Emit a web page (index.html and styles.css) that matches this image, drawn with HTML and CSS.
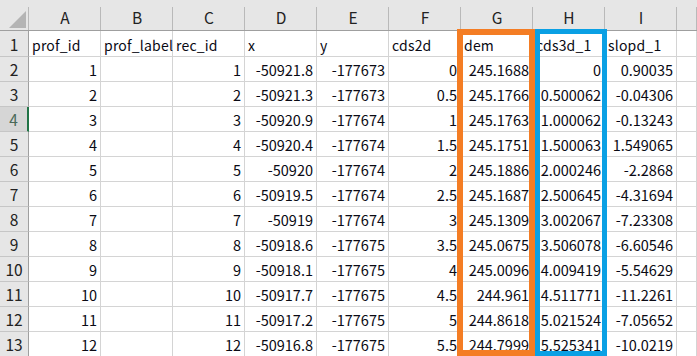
FILE: index.html
```html
<!DOCTYPE html>
<html lang="ja">
<head>
<meta charset="utf-8">
<title>Sheet</title>
<link rel="stylesheet" href="styles.css">
</head>
<body>
<div class="sheet">
  <div class="grid">
    <div class="corner"><svg class="tri" width="17" height="17" viewBox="0 0 17 17"><polygon points="17,0 17,17 0,17" fill="#b4b4b4"/></svg></div>
    <div class="ch">A</div><div class="ch">B</div><div class="ch">C</div><div class="ch">D</div><div class="ch">E</div><div class="ch">F</div><div class="ch">G</div><div class="ch">H</div><div class="ch">I</div><div class="ch"></div>

    <div class="rh">1</div><div class="c t">prof_id</div><div class="c t">prof_label</div><div class="c t">rec_id</div><div class="c t">x</div><div class="c t">y</div><div class="c t">cds2d</div><div class="c t">dem</div><div class="c t">cds3d_1</div><div class="c t">slopd_1</div><div class="c"></div>

    <div class="rh">2</div><div class="c n">1</div><div class="c"></div><div class="c n">1</div><div class="c n">-50921.8</div><div class="c n">-177673</div><div class="c n">0</div><div class="c n">245.1688</div><div class="c n">0</div><div class="c n">0.90035</div><div class="c"></div>

    <div class="rh">3</div><div class="c n">2</div><div class="c"></div><div class="c n">2</div><div class="c n">-50921.3</div><div class="c n">-177673</div><div class="c n">0.5</div><div class="c n">245.1766</div><div class="c n">0.500062</div><div class="c n">-0.04306</div><div class="c"></div>

    <div class="rh sel">4</div><div class="c n">3</div><div class="c"></div><div class="c n">3</div><div class="c n">-50920.9</div><div class="c n">-177674</div><div class="c n">1</div><div class="c n">245.1763</div><div class="c n">1.000062</div><div class="c n">-0.13243</div><div class="c"></div>

    <div class="rh">5</div><div class="c n">4</div><div class="c"></div><div class="c n">4</div><div class="c n">-50920.4</div><div class="c n">-177674</div><div class="c n">1.5</div><div class="c n">245.1751</div><div class="c n">1.500063</div><div class="c n">1.549065</div><div class="c"></div>

    <div class="rh">6</div><div class="c n">5</div><div class="c"></div><div class="c n">5</div><div class="c n">-50920</div><div class="c n">-177674</div><div class="c n">2</div><div class="c n">245.1886</div><div class="c n">2.000246</div><div class="c n">-2.2868</div><div class="c"></div>

    <div class="rh">7</div><div class="c n">6</div><div class="c"></div><div class="c n">6</div><div class="c n">-50919.5</div><div class="c n">-177674</div><div class="c n">2.5</div><div class="c n">245.1687</div><div class="c n">2.500645</div><div class="c n">-4.31694</div><div class="c"></div>

    <div class="rh">8</div><div class="c n">7</div><div class="c"></div><div class="c n">7</div><div class="c n">-50919</div><div class="c n">-177674</div><div class="c n">3</div><div class="c n">245.1309</div><div class="c n">3.002067</div><div class="c n">-7.23308</div><div class="c"></div>

    <div class="rh">9</div><div class="c n">8</div><div class="c"></div><div class="c n">8</div><div class="c n">-50918.6</div><div class="c n">-177675</div><div class="c n">3.5</div><div class="c n">245.0675</div><div class="c n">3.506078</div><div class="c n">-6.60546</div><div class="c"></div>

    <div class="rh">10</div><div class="c n">9</div><div class="c"></div><div class="c n">9</div><div class="c n">-50918.1</div><div class="c n">-177675</div><div class="c n">4</div><div class="c n">245.0096</div><div class="c n">4.009419</div><div class="c n">-5.54629</div><div class="c"></div>

    <div class="rh">11</div><div class="c n">10</div><div class="c"></div><div class="c n">10</div><div class="c n">-50917.7</div><div class="c n">-177675</div><div class="c n">4.5</div><div class="c n">244.961</div><div class="c n">4.511771</div><div class="c n">-11.2261</div><div class="c"></div>

    <div class="rh">12</div><div class="c n">11</div><div class="c"></div><div class="c n">11</div><div class="c n">-50917.2</div><div class="c n">-177675</div><div class="c n">5</div><div class="c n">244.8618</div><div class="c n">5.021524</div><div class="c n">-7.05652</div><div class="c"></div>

    <div class="rh">13</div><div class="c n">12</div><div class="c"></div><div class="c n">12</div><div class="c n">-50916.8</div><div class="c n">-177675</div><div class="c n">5.5</div><div class="c n">244.7999</div><div class="c n">5.525341</div><div class="c n">-10.0219</div><div class="c"></div>
  </div>
  <div class="hl hl-orange"></div>
  <div class="hl hl-blue"></div>
</div>
</body>
</html>
```

FILE: styles.css
```css
* { box-sizing: border-box; }

body {
  margin: 0;
  background: #ffffff;
  font-family: "Noto Sans CJK JP", "Noto Sans", sans-serif;
  font-size: 14.5px;
  color: #0a0a14;
}

.sheet {
  position: relative;
  width: 697px;
  height: 356px;
  overflow: hidden;
}

.grid {
  display: grid;
  grid-template-columns: 29px repeat(9, 72px) 20px;
  grid-template-rows: 31px 26px repeat(12, 25px);
}

.corner {
  background: linear-gradient(#b9b9b9, #b9b9b9) no-repeat right bottom / 1px 23px, #e6e6e6;
  border-bottom: 1px solid #9f9f9f;
  display: flex;
  justify-content: flex-end;
  align-items: flex-end;
  padding: 0 3px 2px 0;
}

.tri { display: block; }

.ch {
  background: linear-gradient(#b9b9b9, #b9b9b9) no-repeat right bottom / 1px 23px, #e6e6e6;
  border-bottom: 1px solid #9f9f9f;
  display: flex;
  justify-content: center;
  align-items: center;
  padding-top: 6px;
  color: #222222;
  font-size: 15.5px;
  line-height: 1;
}

.rh {
  background: #e6e6e6;
  border-right: 1px solid #9f9f9f;
  border-bottom: 1px solid #c6c6c6;
  display: flex;
  justify-content: center;
  align-items: center;
  padding-top: 2px;
  color: #222222;
  font-size: 15.5px;
  line-height: 1;
}

.rh.sel {
  background: #d6d6d6;
  color: #4a6a58;
  border-right: 2px solid #217346;
}

.c {
  border-right: 1px solid #d4d4d4;
  border-bottom: 1px solid #d4d4d4;
  display: flex;
  align-items: center;
  padding: 2px 3px 0 3px;
  white-space: nowrap;
  line-height: 1;
}

.t {
  font-size: 14px;
  letter-spacing: 0.2px;
  padding-left: 3px;
  padding-right: 0;
}

.n { justify-content: flex-end; }

.hl {
  position: absolute;
  top: 29px;
  height: 327px;
}

.hl-orange {
  left: 457px;
  width: 78px;
  border: 6px solid #f47d24;
}

.hl-blue {
  left: 535px;
  width: 72px;
  border: 5px solid #0aa0e4;
}
```
